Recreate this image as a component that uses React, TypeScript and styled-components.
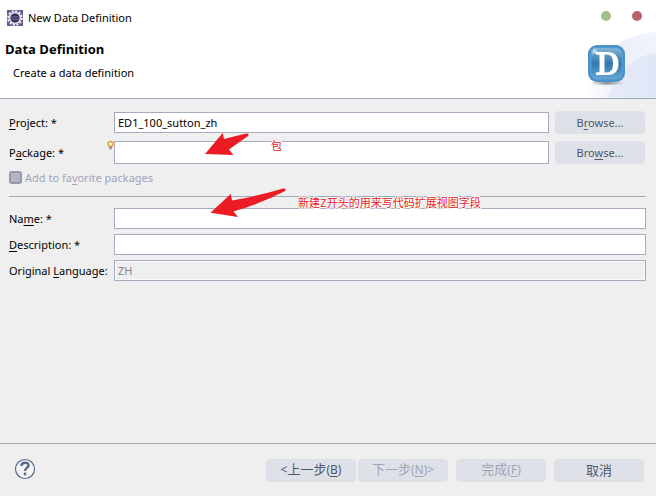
import React from "react";
import styled, { createGlobalStyle, css } from "styled-components";

const GlobalStyle = createGlobalStyle`
  *, *::before, *::after { box-sizing: border-box; }
  body { margin: 0; background: #fff; }
  body, button, input {
    font-family: "Noto Sans", "Noto Sans CJK SC", sans-serif;
    font-size: 11px;
  }
  h1, h2, p { margin: 0; font-size: 11px; }
  u { text-underline-offset: 2px; text-decoration-skip-ink: none; }
`;

const Dialog = styled.div`
  display: flex;
  flex-direction: column;
  min-height: 100vh;
  color: #000;
  background: #efefef;
  border-bottom: 2px solid #fff;
  overflow: hidden;
`;

const Header = styled.header`
  position: relative;
  height: 99px;
  background: #fff;
  border-bottom: 1px solid #a0a9ba;
`;

const HeaderArt = styled.svg`
  position: absolute;
  right: 0;
  bottom: 0;
`;

const TitleBar = styled.div`
  position: relative;
  display: flex;
  align-items: center;
  gap: 5px;
  height: 36px;
  padding: 0 14px 0 7px;
`;

const WindowTitle = styled.h1`
  flex: 1;
  font-weight: 400;
  line-height: 16px;
`;

const WindowButton = styled.button<{ $color: string }>`
  width: 10px;
  height: 10px;
  margin: 0 0 4px 16px;
  padding: 0;
  border: 0;
  border-radius: 50%;
  background: ${(p) => p.$color};
`;

const Heading = styled.h2`
  padding: 4px 5px 0;
  font-family: "Open Sans", sans-serif;
  font-size: 13px;
  font-weight: 700;
  line-height: 18px;
`;

const Subtitle = styled.p`
  padding: 6px 13px 0;
  line-height: 18px;
`;

const Content = styled.main`
  position: relative;
  flex: 1;
  padding: 12px 10px 0 9px;
`;

const Row = styled.div<{ $gap: number }>`
  display: grid;
  grid-template-columns: 105px minmax(0, 1fr) auto;
  align-items: center;
  margin-bottom: ${(p) => p.$gap}px;
`;

const Label = styled.label`
  display: flex;
  align-items: center;
  align-self: stretch;
  justify-content: space-between;
  line-height: 18px;
  white-space: nowrap;
`;

const Hint = styled.svg`
  align-self: flex-start;
`;

const TextBox = styled.input<{ $tall?: boolean }>`
  width: 100%;
  height: ${(p) => (p.$tall ? 23 : 21)}px;
  padding: 0 3px;
  color: #000;
  background: #fff;
  border: 1px solid #a5abbd;
  border-radius: 0;
  outline: 0;
  &:disabled {
    color: #858585;
    background: #efefef;
    box-shadow: inset 0 0 0 1px #fafafa;
  }
`;

const Button = styled.button`
  width: 90px;
  height: 23px;
  padding: 0;
  color: #50566a;
  background: #dee1e8;
  border: 0;
  border-radius: 4px;
  white-space: nowrap;
  &:disabled { color: #a0a5b6; }
`;

const BrowseButton = styled(Button)`
  margin: 0 1px 0 6px;
`;

const WizardButton = styled(Button)`
  font-size: 13px;
  line-height: 18px;
  padding-bottom: 2px;
`;

const Key = styled.span`
  font-size: 12px;
`;

const Favorite = styled.label`
  display: flex;
  align-items: center;
  gap: 3px;
  height: 18px;
  margin-top: 4px;
  color: #a0a5b6;
`;

const CheckBox = styled.input`
  appearance: none;
  width: 13px;
  height: 13px;
  margin: 0;
  background: #b2b5c2;
  border: 2px solid #9699a8;
  border-radius: 3px;
`;

const Divider = styled.hr`
  height: 1px;
  margin: 10px 0 11px;
  border: 0;
  background: #9fa9b8;
`;

const Arrows = styled.svg`
  position: absolute;
  top: 0;
  left: 200px;
  pointer-events: none;
`;

const halo = css`
  text-shadow: -1px -1px #fff, 1px -1px #fff, -1px 1px #fff, 1px 1px #fff, 0 0 2px #999;
`;

const Note = styled.span<{ $x: number; $y: number }>`
  position: absolute;
  left: ${(p) => p.$x}px;
  top: ${(p) => p.$y}px;
  color: #ed1c24;
  font-family: "Noto Sans CJK SC", sans-serif;
  font-size: 11px;
  line-height: 16px;
  white-space: nowrap;
  pointer-events: none;
  ${halo}
`;

const Footer = styled.footer`
  display: flex;
  align-items: center;
  height: 53px;
  padding: 1px 12px 0 14px;
  border-top: 1px solid #9fa9b8;
`;

const HelpButton = styled.button`
  display: flex;
  margin: 0 auto 3px 0;
  padding: 0;
  border: 0;
  background: none;
`;

const Steps = styled.div`
  display: flex;
  gap: 2px;
  margin-right: 8px;
`;

const Actions = styled.div`
  display: flex;
  gap: 8px;
`;

function EclipseIcon() {
  return (
    <svg width="16" height="16" viewBox="0 0 16 16" aria-hidden="true">
      <rect width="16" height="16" fill="#6a5a94" />
      <circle cx="8" cy="8" r="6.8" fill="none" stroke="#f0eef4" strokeWidth="2" strokeDasharray="2.1 1.46" />
      <circle cx="8" cy="8" r="5.4" fill="#39334f" stroke="#dcd9e4" strokeWidth="1.7" />
      <circle cx="8" cy="8" r="4.2" fill="#3b3560" />
      <path d="M4.600 6.500h6.800M4 8h8M4.600 9.500h6.800" stroke="#6f6996" strokeWidth=".7" />
    </svg>
  );
}

function HeaderGraphic() {
  return (
    <HeaderArt width="76" height="70" viewBox="0 0 76 70" aria-hidden="true">
      <defs>
        <linearGradient id="swoosh" x1="0" y1="0" x2="1" y2="0">
          <stop offset="0" stopColor="#fff" />
          <stop offset=".55" stopColor="#ebeffa" />
          <stop offset="1" stopColor="#f3f6fd" />
        </linearGradient>
        <linearGradient id="swooshFront" x1="0" y1="0" x2="1" y2="0">
          <stop offset="0" stopColor="#e6eaf7" />
          <stop offset="1" stopColor="#dde4f5" />
        </linearGradient>
        <linearGradient id="tile" x1="0" y1="0" x2="0" y2="1">
          <stop offset="0" stopColor="#83b3d6" />
          <stop offset=".5" stopColor="#3277ad" />
          <stop offset="1" stopColor="#62a8d6" />
        </linearGradient>
        <radialGradient id="shadow">
          <stop offset="0" stopColor="#777" />
          <stop offset="1" stopColor="#aaa" stopOpacity="0" />
        </radialGradient>
      </defs>
      <path d="M3 70C8 31 38 7 76 4V70Z" fill="url(#swoosh)" />
      <path d="M28 70C35 38 51 15 76 7V70Z" fill="#eef2fb" opacity=".45" />
      <path d="M28 70C35 44 52 28 76 25V70Z" fill="url(#swooshFront)" opacity=".85" />
      <ellipse cx="27" cy="55" rx="18" ry="3" fill="url(#shadow)" />
      <rect x="8" y="17" width="37" height="37" rx="9" fill="#4891c9" />
      <rect x="11" y="20" width="31" height="31" rx="6" fill="url(#tile)" stroke="#6eacd8" strokeWidth=".7" />
      <path
        fillRule="evenodd"
        d="M16 24H27.500C35 24 38.500 28.500 38.500 35.500S35 47 27.500 47H16V44.500L19.500 44V27L16 26.500ZM24.500 26.500V44.500H27C31.500 44.500 33 41 33 35.500S31.500 26.500 27 26.500Z"
        fill="#fff"
      />
      <path d="M14 19l.8 3 3-2-2 3 3 1-3 .8 1 2-2.500-1.500L12 27l1-3-3-1 3-.5Z" fill="#d8ecf7" opacity=".75" />
    </HeaderArt>
  );
}

function Bulb() {
  return (
    <Hint width="7" height="9" viewBox="0 0 7 9" aria-hidden="true">
      <path d="M1 1.500Q3.500-.5 6 1.500Q6.300 3.500 4.700 5.500H2.300Q.7 3.500 1 1.500Z" fill="#fff1ca" stroke="#e39a35" strokeWidth="1.400" />
      <path d="M2.500 6h2v1.500l-1 .8-1-.8Z" fill="#bbb" stroke="#777" strokeWidth=".7" />
    </Hint>
  );
}

function HelpIcon() {
  return (
    <svg width="22" height="22" viewBox="0 0 22 22" aria-hidden="true">
      <circle cx="11" cy="11" r="9.500" fill="#f5f5f5" stroke="#566a8d" strokeWidth="1.200" />
      <path d="M7.400 8C7.500 3.700 14.600 3.700 14.500 7.400C14.400 10 11 9.800 11 13" fill="none" stroke="#566a8d" strokeWidth="2.400" />
      <circle cx="11" cy="16" r="1.400" fill="#566a8d" />
    </svg>
  );
}

export default function App() {
  return (
    <>
      <GlobalStyle />
      <Dialog role="dialog" aria-labelledby="window-title">
        <Header>
          <HeaderGraphic />
          <TitleBar>
            <EclipseIcon />
            <WindowTitle id="window-title">New Data Definition</WindowTitle>
            <WindowButton $color="#a3be8c" aria-label="Maximize" />
            <WindowButton $color="#bf616a" aria-label="Close" />
          </TitleBar>
          <Heading>Data Definition</Heading>
          <Subtitle>Create a data definition</Subtitle>
        </Header>
        <Content>
          <Row $gap={7}>
            <Label htmlFor="project"><span><u>P</u>roject: *</span></Label>
            <TextBox id="project" defaultValue="ED1_100_sutton_zh" />
            <BrowseButton>B<u>r</u>owse...</BrowseButton>
          </Row>
          <Row $gap={0}>
            <Label htmlFor="package"><span>P<u>a</u>ckage: *</span><Bulb /></Label>
            <TextBox id="package" $tall />
            <BrowseButton>Bro<u>w</u>se...</BrowseButton>
          </Row>
          <Favorite>
            <CheckBox type="checkbox" disabled />
            <span>Add to fa<u>v</u>orite packages</span>
          </Favorite>
          <Divider />
          <Row $gap={5}>
            <Label htmlFor="name"><span>Na<u>m</u>e: *</span></Label>
            <TextBox id="name" />
          </Row>
          <Row $gap={5}>
            <Label htmlFor="description"><span><u>D</u>escription: *</span></Label>
            <TextBox id="description" />
          </Row>
          <Row $gap={5}>
            <Label htmlFor="language"><span>Original <u>L</u>anguage:</span></Label>
            <TextBox id="language" defaultValue="ZH" disabled />
          </Row>
          <Arrows width="90" height="122" viewBox="200 99 90 122" fill="#ed1c24" aria-hidden="true">
            <path d="M205 154L222.700 133L224 139L246 133.500Q250 133.500 248 136L229 149.500L233.500 155Z" />
            <path d="M210.500 212.700L230.700 194L232 200.500Q258 196 283 188.500Q287 188 285 191Q260 204 233.500 211.500L238 217Z" />
          </Arrows>
          <Note $x={271} $y={38}>包</Note>
          <Note $x={298} $y={95}>新建Z开头的用来写代码扩展视图字段</Note>
        </Content>
        <Footer>
          <HelpButton aria-label="Help"><HelpIcon /></HelpButton>
          <Steps>
            <WizardButton><Key>&lt;</Key>上一步<Key>(<u>B</u>)</Key></WizardButton>
            <WizardButton disabled>下一步<Key>(<u>N</u>)&gt;</Key></WizardButton>
          </Steps>
          <Actions>
            <WizardButton disabled>完成<Key>(<u>F</u>)</Key></WizardButton>
            <WizardButton>取消</WizardButton>
          </Actions>
        </Footer>
      </Dialog>
    </>
  );
}
